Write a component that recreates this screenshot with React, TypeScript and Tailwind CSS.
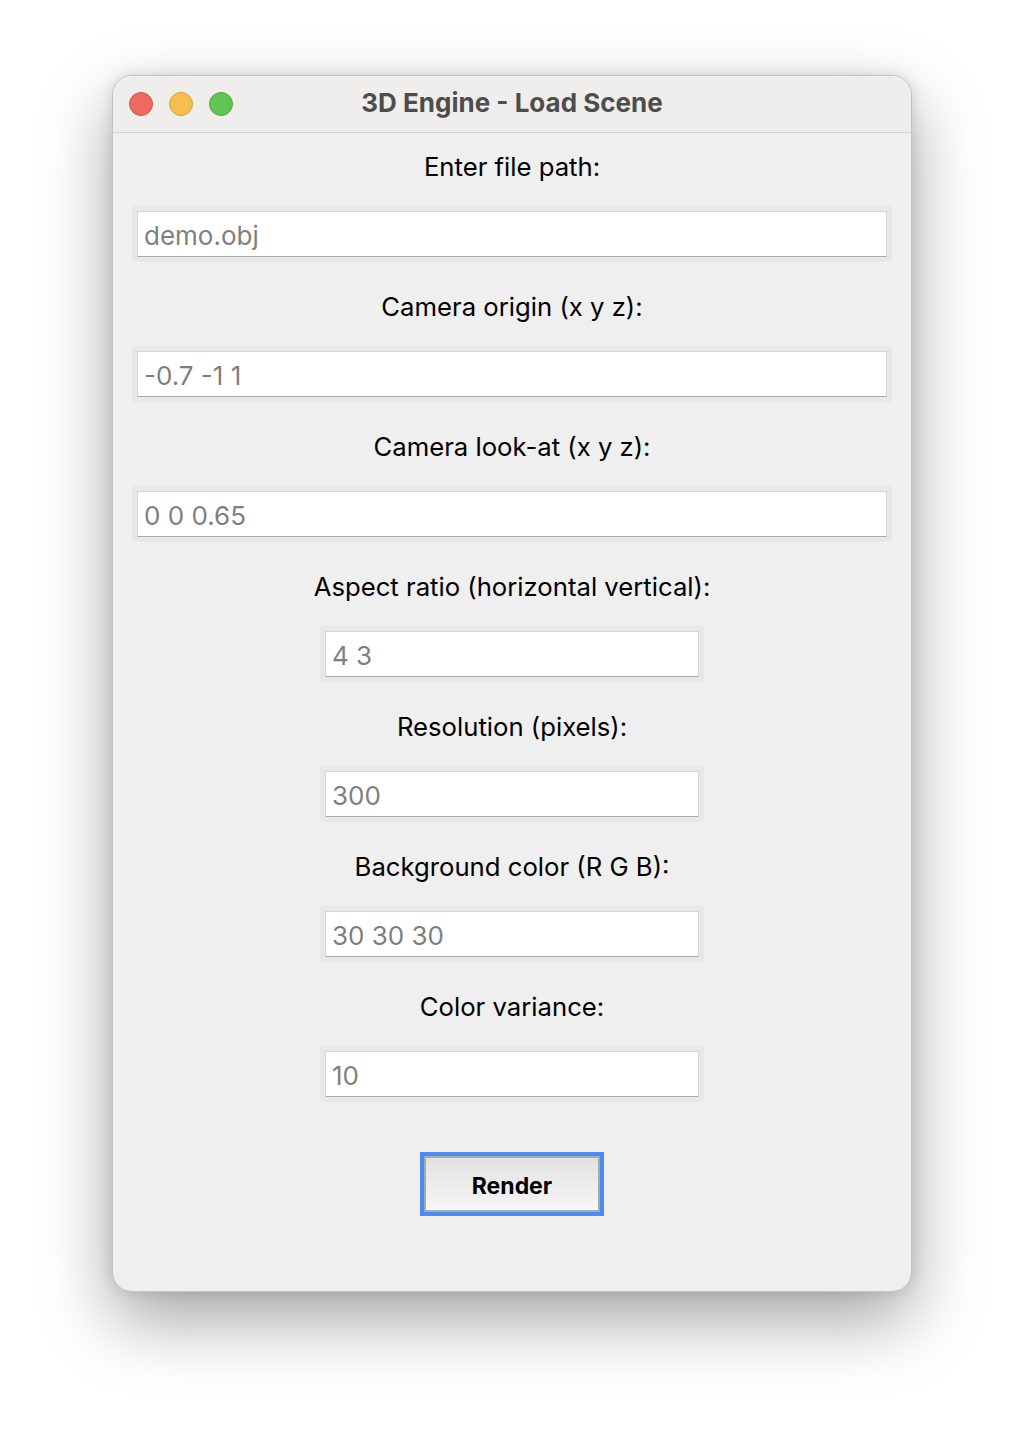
import React from "react";

const fields: { label: string; value: string; wide: boolean }[] = [
  { label: "Enter file path:", value: "demo.obj", wide: true },
  { label: "Camera origin (x y z):", value: "-0.7 -1 1", wide: true },
  { label: "Camera look-at (x y z):", value: "0 0 0.65", wide: true },
  { label: "Aspect ratio (horizontal vertical):", value: "4 3", wide: false },
  { label: "Resolution (pixels):", value: "300", wide: false },
  { label: "Background color (R G B):", value: "30 30 30", wide: false },
  { label: "Color variance:", value: "10", wide: false },
];

function Field({ label, value, wide }: { label: string; value: string; wide: boolean }) {
  return (
    <div className="flex flex-col items-center">
      <div className="h-[40px] flex items-center justify-center text-[25.7px] text-black leading-none">
        {label}
      </div>
      <div className={`mt-[19px] bg-[#e8e8e8] p-[5px] ${wide ? "w-[760px]" : "w-[384px]"}`}>
        <div className="h-[46px] bg-white border border-[#d4d4d4] border-b-[#a9a9a9] flex items-center pl-[6px] pt-[3px] text-[26px] text-[#7f7f7f] leading-none">
          {value}
        </div>
      </div>
    </div>
  );
}

export default function App() {
  return (
    <div className="w-[1024px] h-[1440px] bg-white flex justify-center pt-[75px]" style={{ fontFamily: "Inter, 'Liberation Sans', sans-serif" }}>
      <div className="w-[800px] h-[1217px] rounded-[20px] bg-[#efefef] border border-[#c4c4c4] shadow-[0_28px_70px_rgba(0,0,0,0.36),0_0_14px_rgba(0,0,0,0.12)] overflow-hidden flex flex-col">
        <div className="h-[57px] shrink-0 bg-[#efeeed] border-b border-[#d2d2d2] relative flex items-center justify-center">
          <div className="absolute left-[16px] top-[16px] flex gap-[16px]">
            <div className="w-[24px] h-[24px] rounded-full bg-[#ec6a5e] border border-[#d1564a]" />
            <div className="w-[24px] h-[24px] rounded-full bg-[#f4bf4f] border border-[#d8a23a]" />
            <div className="w-[24px] h-[24px] rounded-full bg-[#61c554] border border-[#4aa83e]" />
          </div>
          <div className="text-[26px] font-bold text-[#4d4d4d] leading-none pb-[3px]">3D Engine - Load Scene</div>
        </div>
        <div className="flex flex-col items-center pt-[14px] gap-[25px]">
          {fields.map((f) => (
            <Field key={f.label} {...f} />
          ))}
        </div>
        <div className="flex justify-center mt-[50px]">
          <div className="w-[184px] h-[64px] border-[4px] border-[#4a8cf5] bg-[#4a8cf5]">
            <div className="w-full h-full border-[2px] border-[#a9a9a9] bg-gradient-to-b from-[#e2e2e2] to-[#f6f6f6] flex items-center justify-center pt-[4px] text-[23px] font-bold text-black leading-none">
              Render
            </div>
          </div>
        </div>
      </div>
    </div>
  );
}
